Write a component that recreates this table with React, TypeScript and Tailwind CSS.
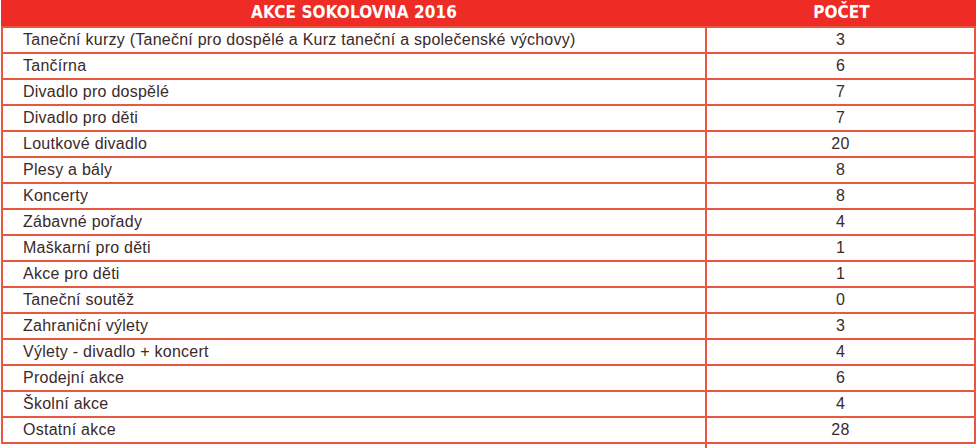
import React from "react";

const rows: [string, string][] = [
  ["Taneční kurzy (Taneční pro dospělé a Kurz taneční a společenské výchovy)", "3"],
  ["Tančírna", "6"],
  ["Divadlo pro dospělé", "7"],
  ["Divadlo pro děti", "7"],
  ["Loutkové divadlo", "20"],
  ["Plesy a bály", "8"],
  ["Koncerty", "8"],
  ["Zábavné pořady", "4"],
  ["Maškarní pro děti", "1"],
  ["Akce pro děti", "1"],
  ["Taneční soutěž", "0"],
  ["Zahraniční výlety", "3"],
  ["Výlety - divadlo + koncert", "4"],
  ["Prodejní akce", "6"],
  ["Školní akce", "4"],
  ["Ostatní akce", "28"],
];

export default function App() {
  return (
    <div className="w-[977px] h-[448px] bg-white overflow-hidden" style={{ fontFamily: '"Liberation Sans", Arial, sans-serif' }}>
      <div className="ml-[1px] w-[975px]">
        <div className="flex h-[26px] bg-[#ee2c25] text-white font-bold text-[17px] items-center" style={{ fontFamily: '"DejaVu Sans Condensed", "Liberation Sans", sans-serif' }}>
          <div className="w-[706px] text-center tracking-[0.1px]">AKCE SOKOLOVNA 2016</div>
          <div className="flex-1 text-center">POČET</div>
        </div>
        <div className="border-l-2 border-r-2 border-[#e9573f]">
          {rows.map(([name, n], i) => (
            <div key={i} className="flex h-[26px] border-t-2 border-[#e9573f] text-[16px] tracking-[0.25px] text-[#3b2a2a] leading-none">
              <div className="w-[704px] border-r-2 border-[#e9573f] pl-[20px] flex items-center">{name}</div>
              <div className="flex-1 flex items-center justify-center">{n}</div>
            </div>
          ))}
        </div>
        <div className="flex h-[6px] border-t-2 border-[#e9573f]">
          <div className="w-[706px] border-r-2 border-[#e9573f]"></div>
        </div>
      </div>
    </div>
  );
}
